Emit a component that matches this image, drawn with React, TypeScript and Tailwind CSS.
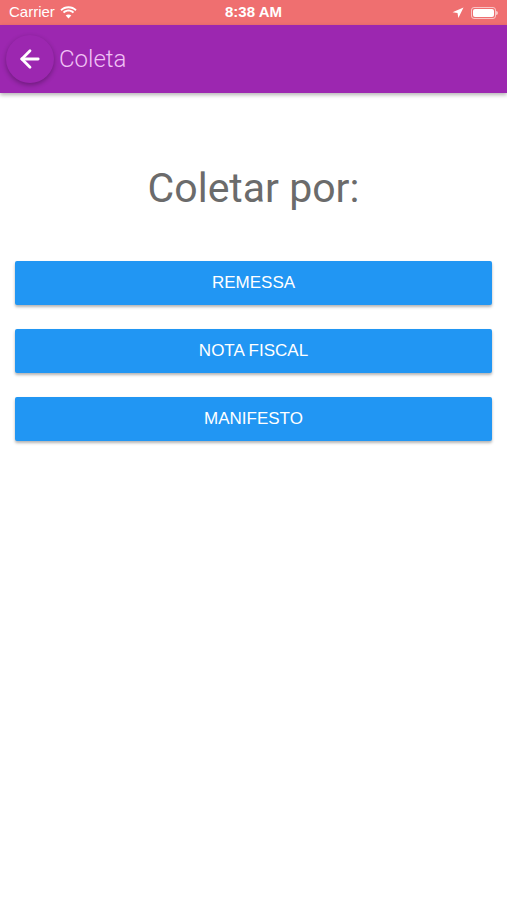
import { ArrowLeft } from 'lucide-react'

const options = ['REMESSA', 'NOTA FISCAL', 'MANIFESTO']

function StatusBar() {
  return (
    <div className="h-[25px] bg-[#ef6f70] flex items-center justify-between px-[9px] text-white text-[15px] font-['Liberation_Sans',sans-serif]">
      <div className="flex items-center gap-[5px] w-[120px]">
        <span>Carrier</span>
        <svg width="17" height="13" viewBox="0 0 17 13" fill="white">
          <path d="M8.5 2.2c2.6 0 5 1 6.8 2.7l1.3-1.4C14.5 1.4 11.6 0.2 8.5 0.2S2.5 1.4 0.4 3.5l1.3 1.4C3.5 3.2 5.9 2.2 8.5 2.2z" />
          <path d="M8.5 5.6c1.6 0 3.1 0.6 4.3 1.7l1.3-1.4C12.6 4.5 10.6 3.6 8.5 3.6S4.4 4.5 2.9 5.9l1.3 1.4C5.4 6.2 6.9 5.6 8.5 5.6z" />
          <path d="M8.5 12.6l2.8-3c-0.7-0.7-1.7-1.1-2.8-1.1s-2.1 0.4-2.8 1.1z" />
        </svg>
      </div>
      <span className="font-bold">8:38 AM</span>
      <div className="flex items-center justify-end gap-[7px] w-[120px]">
        <svg width="12" height="12" viewBox="0 0 12 12" fill="white">
          <path d="M11.5 0.5L0.5 5.2l5 0.9 0.9 5z" />
        </svg>
        <div className="flex items-center">
          <div className="w-[25px] h-[12px] rounded-[3px] border border-white/60 p-[1px]">
            <div className="w-full h-full bg-white rounded-[2px]" />
          </div>
          <div className="w-[2px] h-[4px] bg-white/60 rounded-r-sm" />
        </div>
      </div>
    </div>
  )
}

export default function App() {
  return (
    <div className="w-[507px] h-[900px] bg-white font-['Roboto',sans-serif] overflow-hidden">
      <StatusBar />
      <div className="h-[68px] bg-[#9c27b0] flex items-center shadow-[0_2px_4px_rgba(0,0,0,0.3)] relative z-10">
        <button className="ml-[6px] w-[48px] h-[48px] rounded-full bg-[#9c27b0] shadow-[0_2px_5px_rgba(0,0,0,0.3)] flex items-center justify-center text-white">
          <ArrowLeft size={28} strokeWidth={2.4} />
        </button>
        <span className="ml-[5px] text-[24px] font-light text-[#f0c2f5]">Coleta</span>
      </div>
      <div className="flex flex-col items-center pt-[75px]">
        <h1 className="text-[41px] text-[#6b6b6b] leading-none">Coletar por:</h1>
      </div>
      <div className="flex flex-col gap-[24px] px-[15px] pt-[52px]">
        {options.map((o) => (
          <button
            key={o}
            className="h-[44px] w-full bg-[#2196f3] rounded-[2px] shadow-[0_2px_3px_rgba(0,0,0,0.3)] text-white text-[17px] font-['Liberation_Sans',sans-serif]"
          >
            {o}
          </button>
        ))}
      </div>
    </div>
  )
}
